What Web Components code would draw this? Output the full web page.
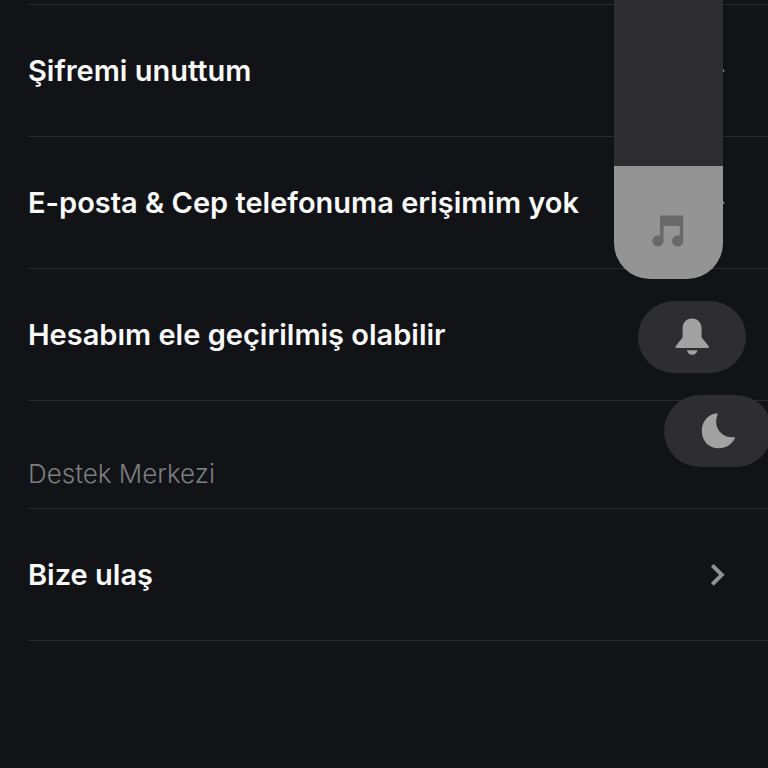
<!DOCTYPE html>
<html lang="tr">
<head>
<meta charset="utf-8">
<meta name="viewport" content="width=device-width, initial-scale=1">
<title>Destek Merkezi</title>
<style>
  body {
    margin: 0;
    min-height: 100vh;
    background: #121317;
    color: #fafafa;
    font-family: Inter, "Liberation Sans", sans-serif;
    overflow-x: hidden;
  }
</style>
</head>
<body>
<help-screen></help-screen>

<script>
// One tappable row with a label and a chevron
class HelpRow extends HTMLElement {
  constructor() {
    super();
    this.attachShadow({ mode: 'open' }).innerHTML = `
      <style>
        :host {
          display: block;
          border-bottom: 1px solid #2b2c30;
        }
        a {
          display: flex;
          align-items: center;
          justify-content: space-between;
          padding: 48px 40px 47px 0;
          color: inherit;
          font-size: 29px;
          font-weight: 600;
          line-height: 36px;
          text-decoration: none;
        }
        svg {
          flex: none;
          width: 20px;
          height: 28px;
        }
      </style>
      <a href="#">
        <slot></slot>
        <svg viewBox="0 0 20 28" fill="none" stroke="#909195" stroke-width="4" aria-hidden="true">
          <path d="M4.3 4.3 L13.8 13.8 L4.3 23.3"/>
        </svg>
      </a>
    `;
  }
}

// A titled group of rows, the heading slot is optional
class HelpGroup extends HTMLElement {
  constructor() {
    super();
    this.attachShadow({ mode: 'open' }).innerHTML = `
      <style>
        :host {
          display: block;
        }
        .rows {
          border-top: 1px solid #2b2c30;
        }
        ::slotted(h2) {
          margin: 0;
          padding: 56px 0 17px;
          color: #7c7d81;
          font-size: 26px;
          font-weight: 300;
          line-height: 34px;
        }
      </style>
      <slot name="heading"></slot>
      <div class="rows"><slot></slot></div>
    `;
  }
}

// Vertical volume slider, filled from the bottom
class VolumeSlider extends HTMLElement {
  constructor() {
    super();
    this.attachShadow({ mode: 'open' }).innerHTML = `
      <style>
        :host {
          display: grid;
          width: 109px;
          height: 279px;
        }
        input {
          grid-area: 1 / 1;
          appearance: none;
          writing-mode: vertical-lr;
          direction: rtl;
          width: 100%;
          height: 100%;
          margin: 0;
          border-radius: 0 0 36px 36px;
          background: linear-gradient(to top, #949494 var(--level, 50%), #2e2e30 0);
        }
        input::-webkit-slider-thumb {
          appearance: none;
          width: 100%;
          height: 1px;
          background: transparent;
        }
        svg {
          grid-area: 1 / 1;
          place-self: end center;
          width: 36px;
          height: 36px;
          margin-bottom: 30px;
          pointer-events: none;
        }
      </style>
      <input type="range" min="0" max="279" value="113" aria-label="Ses">
      <svg viewBox="0 0 36 36" fill="#696969" aria-hidden="true">
        <path d="M9 2.5 H32.3 V28 A5.6 5.6 0 1 1 28.8 22.8 V13 H12.5 V28 A5.6 5.6 0 1 1 9 22.8 Z"/>
      </svg>
    `;
    this._input = this.shadowRoot.querySelector('input');
    this._input.addEventListener('input', () => this._setLevel());
    this._setLevel();
  }

  _setLevel() {
    const { value, max } = this._input;
    this._input.style.setProperty('--level', `${(value / max) * 100}%`);
  }
}

// Pill button that holds a slotted icon
class SoundButton extends HTMLElement {
  constructor() {
    super();
    this.attachShadow({ mode: 'open' }).innerHTML = `
      <style>
        :host {
          display: block;
        }
        button {
          display: flex;
          align-items: center;
          justify-content: center;
          width: 108px;
          height: 72px;
          padding: 0;
          border: 0;
          border-radius: 36px;
          background: #2e2e30;
          color: #a2a2a3;
        }
        ::slotted(svg) {
          width: 40px;
          height: 40px;
        }
      </style>
      <button type="button"><slot></slot></button>
    `;
    this.shadowRoot.querySelector('button').setAttribute('aria-label', this.getAttribute('label') || '');
  }

  static get observedAttributes() {
    return ['label'];
  }

  attributeChangedCallback(name, oldValue, newValue) {
    this.shadowRoot.querySelector('button').setAttribute('aria-label', newValue);
  }
}

// Floating sound controls, fanned out to the right
class SoundPanel extends HTMLElement {
  constructor() {
    super();
    this.attachShadow({ mode: 'open' }).innerHTML = `
      <style>
        :host {
          position: absolute;
          top: 0;
          right: 0;
          display: flex;
          flex-direction: column;
          align-items: flex-end;
          gap: 22px;
        }
        volume-slider { margin-right: 45px; }
        .bell { margin-right: 22px; }
        .moon { margin-right: -4px; }
      </style>
      <volume-slider></volume-slider>
      <sound-button class="bell" label="Zil">
        <svg viewBox="0 0 40 40" fill="currentColor" aria-hidden="true">
          <path d="M20 1.5 C26 1.5 29.6 6 29.6 11.5 V20.5 L36.6 29 Q37.6 31 36 31 H4.4 Q2.8 31 3.8 29 L10.6 20.5 V11.5 C10.6 6 14 1.5 20 1.5 Z"/>
          <path d="M15 33.2 H25.4 C25 36 23 37.8 20.2 37.8 C17.4 37.8 15.5 36 15 33.2 Z"/>
        </svg>
      </sound-button>
      <sound-button class="moon" label="Rahatsız etme">
        <svg viewBox="0 0 40 40" fill="currentColor" aria-hidden="true">
          <path d="M18.5 2.3 C9.6 3.4 3.8 11 3.8 20 C3.8 30 11 37.3 20.5 37.3 C28 37.3 34 33.2 37 27 Q37 25.9 35.5 26.2 C24 27.7 14.4 16 19.7 3.6 Q19.7 2.4 18.5 2.3 Z"/>
        </svg>
      </sound-button>
    `;
  }
}

class HelpScreen extends HTMLElement {
  constructor() {
    super();
    this.attachShadow({ mode: 'open' }).innerHTML = `
      <style>
        :host {
          display: block;
          position: relative;
          min-height: 100vh;
          overflow: hidden;
        }
        main {
          padding: 4px 0 0 28px;
        }
      </style>
      <main>
        <help-group>
          <help-row>Şifremi unuttum</help-row>
          <help-row>E-posta &amp; Cep telefonuma erişimim yok</help-row>
          <help-row>Hesabım ele geçirilmiş olabilir</help-row>
        </help-group>
        <help-group>
          <h2 slot="heading">Destek Merkezi</h2>
          <help-row>Bize ulaş</help-row>
        </help-group>
      </main>
      <sound-panel></sound-panel>
    `;
  }
}

customElements.define('help-row', HelpRow);
customElements.define('help-group', HelpGroup);
customElements.define('volume-slider', VolumeSlider);
customElements.define('sound-button', SoundButton);
customElements.define('sound-panel', SoundPanel);
customElements.define('help-screen', HelpScreen);
</script>
</body>
</html>
